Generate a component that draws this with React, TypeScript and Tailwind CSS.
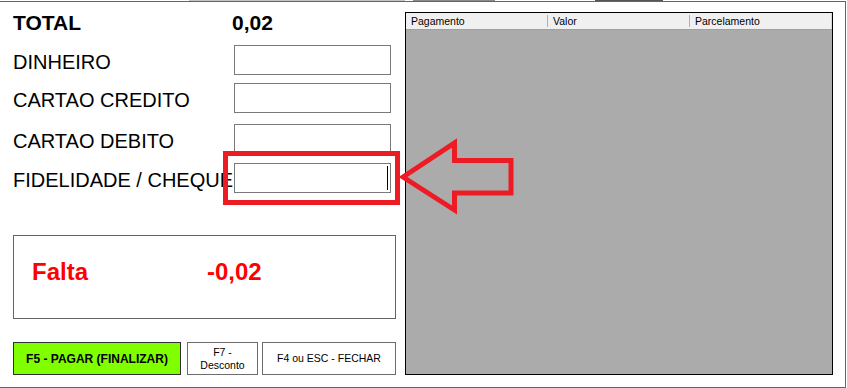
import React from 'react';

const rows = [
  { label: 'DINHEIRO', mt: 'mt-[10px]', cursor: false },
  { label: 'CARTAO CREDITO', mt: 'mt-[8px]', cursor: false },
  { label: 'CARTAO DEBITO', mt: 'mt-[11px]', cursor: false },
  { label: 'FIDELIDADE / CHEQUE', mt: 'mt-[9px]', cursor: true },
];

const PaymentRow: React.FC<{ label: string; mt: string; cursor: boolean }> = ({ label, mt, cursor }) => (
  <div className={`flex items-start ${mt}`}>
    <div className="w-[221px] shrink-0 mt-[5px] text-[20px] leading-[24px] whitespace-nowrap text-black">{label}</div>
    <div className="relative w-[157px] h-[30px] shrink-0 border border-[#7a7a7a] bg-white">
      {cursor && <div className="absolute right-[2px] top-[2px] bottom-[2px] w-[1px] bg-black" />}
    </div>
  </div>
);

export default function App() {
  return (
    <div className="relative w-[847px] h-[388px] overflow-hidden bg-white font-['Liberation_Sans',Arial,sans-serif]">
      {/* remains of the window above, cut off */}
      <div className="flex h-[1px]">
        <div className="w-[189px]" />
        <div className="w-[216px] bg-[#c4c4c4]" />
        <div className="w-[8px]" />
        <div className="w-[82px] bg-[#8a8a8a]" />
        <div className="w-[100px]" />
        <div className="w-[68px] bg-[#555]" />
      </div>

      <div className="flex w-[846px] h-[387px] border-t border-r border-b border-[#646464]">
        <div className="w-[405px] shrink-0 pl-[13px] flex flex-col">
          <div className="flex mt-[9px] text-[21px] leading-[24px] font-bold text-black">
            <div className="w-[219px] shrink-0">TOTAL</div>
            <div>0,02</div>
          </div>

          {rows.map((r) => (
            <PaymentRow key={r.label} {...r} />
          ))}

          <div className="mt-[42px] w-[383px] h-[84px] border border-[#646464] pt-[22px] pl-[18px] flex text-[24px] leading-[28px] font-bold text-[#ff0000]">
            <div className="w-[175px] shrink-0">Falta</div>
            <div>-0,02</div>
          </div>

          <div className="flex mt-[23px] h-[33px]">
            <button className="w-[168px] h-full bg-[#80ff00] border border-[#303030] text-[12px] font-bold text-black flex items-center justify-center">
              F5 - PAGAR (FINALIZAR)
            </button>
            <button className="ml-[6px] w-[71px] h-full bg-white border border-[#6d6d6d] text-[10.5px] leading-[13px] text-black flex flex-col items-center justify-center">
              <span>F7 -</span>
              <span>Desconto</span>
            </button>
            <button className="ml-[4px] w-[134px] h-full bg-white border border-[#6d6d6d] text-[10.5px] text-black flex items-center justify-center">
              F4 ou ESC - FECHAR
            </button>
          </div>
        </div>

        <div className="mt-[10px] w-[428px] h-[363px] shrink-0 border border-black bg-[#ababab] flex flex-col">
          <div className="flex h-[17px] bg-[#f0f0f0] border-b border-[#a0a0a0] text-[10.5px] text-black">
            <div className="w-[141px] flex items-center pl-[5px] pt-[2px]">Pagamento</div>
            <div className="w-[1px] h-[12px] self-center bg-[#b0b0b0]" />
            <div className="w-[141px] flex items-center pl-[5px] pt-[2px]">Valor</div>
            <div className="w-[1px] h-[12px] self-center bg-[#b0b0b0]" />
            <div className="flex-1 flex items-center pl-[5px] pt-[2px] border-r border-[#d8d8d8]">Parcelamento</div>
          </div>
        </div>
      </div>

      {/* red highlight drawn over the screenshot */}
      <div className="absolute left-[223px] top-[151px] w-[177px] h-[54px] border-[5px] border-[#ed1c24]" />
      <svg className="absolute left-0 top-0 pointer-events-none" width="847" height="388" viewBox="0 0 847 388">
        <polygon
          points="403,177 454.5,143 454.5,160.5 511,160.5 511,193 454.5,193 454.5,210"
          fill="none"
          stroke="#ed1c24"
          strokeWidth="5"
          strokeLinejoin="miter"
          strokeMiterlimit="10"
        />
      </svg>
    </div>
  );
}
